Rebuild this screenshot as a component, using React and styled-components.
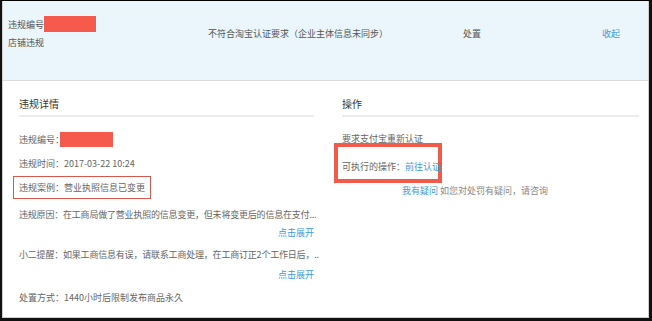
import React from "react";
import styled, { createGlobalStyle } from "styled-components";

const Global = createGlobalStyle`
  html, body { margin: 0; padding: 0; background: #fff; }
  body { font-family: "Noto Sans CJK SC", "Microsoft YaHei", sans-serif; }
`;

const Frame = styled.div`
  width: 652px;
  height: 321px;
  box-sizing: border-box;
  border-top: 1px solid #000;
  border-left: 2px solid #111;
  border-right: 3px solid #111;
  border-bottom: 3px solid #111;
  display: flex;
`;

const Inner = styled.div`
  flex: 1;
  display: flex;
  flex-direction: column;
  border-left: 1px solid #d0d0d0;
  border-right: 1px solid #d0d0d0;
  border-bottom: 1px solid #d0d0d0;
  font-size: 9px;
  color: #666;
  overflow: hidden;
`;

const Header = styled.div`
  height: 80px;
  flex: none;
  box-sizing: border-box;
  background: #eaf6fc;
  border-bottom: 1px solid #dcdcdc;
  display: flex;
  align-items: flex-start;
  padding: 15px 0 0 5px;
  color: #555;
`;

const HeadCol = styled.div`
  width: ${(p) => p.$w}px;
  flex: none;
  line-height: 18px;
  margin-top: ${(p) => p.$top || 0}px;
  color: ${(p) => (p.$link ? "#3b9be0" : "inherit")};
  white-space: nowrap;
`;

const Redact = styled.span`
  display: inline-block;
  vertical-align: middle;
  width: ${(p) => p.$w}px;
  height: ${(p) => p.$h}px;
  background: #f55a4c;
  margin-left: ${(p) => p.$ml || 0}px;
  margin-top: -3px;
`;

const Body = styled.div`
  flex: 1;
  display: flex;
`;

const Panel = styled.div`
  width: ${(p) => p.$w}px;
  flex: none;
  box-sizing: border-box;
  padding: 0 ${(p) => p.$pr}px 0 ${(p) => p.$pl}px;
  display: flex;
  flex-direction: column;
`;

const Title = styled.div`
  font-size: 10px;
  color: #333;
  line-height: 20px;
  padding: 13px 0 1px 0;
  border-bottom: 2px solid #ececec;
`;

const Row = styled.div`
  line-height: ${(p) => p.$lh || 24}px;
  margin-top: ${(p) => p.$mt || 0}px;
  white-space: nowrap;
  letter-spacing: ${(p) => (p.$tight ? "-0.2px" : "0")};
`;

const CaseBox = styled.span`
  display: inline-block;
  border: 1px solid #d9574c;
  line-height: 21px;
  padding: 0 5px;
  margin-left: -6px;
`;

const LinkRow = styled.div`
  line-height: ${(p) => p.$lh}px;
  text-align: right;
  color: #3b9be0;
`;

const Link = styled.span`
  color: #3b9be0;
`;

const ActionBox = styled.div`
  align-self: flex-start;
  box-sizing: border-box;
  width: 108px;
  height: 40px;
  margin: -4px 0 0 -8px;
  border: 4px solid #f25a4a;
  padding: 12px 0 0 4px;
  line-height: 16px;
  white-space: nowrap;
  background: #fff;
`;

const Help = styled.div`
  line-height: 16px;
  padding-left: 60px;
  white-space: nowrap;
  color: #888;
`;

export default function App() {
  return (
    <Frame>
      <Global />
      <Inner>
        <Header>
          <HeadCol $w={200}>
            <div>
              违规编号:
              <Redact $w={52} $h={16} $ml={-3} />
            </div>
            <div>店铺违规</div>
          </HeadCol>
          <HeadCol $w={255} $top={9}>
            不符合淘宝认证要求（企业主体信息未同步）
          </HeadCol>
          <HeadCol $w={139} $top={9}>
            处置
          </HeadCol>
          <HeadCol $w={40} $top={9} $link>
            收起
          </HeadCol>
        </Header>
        <Body>
          <Panel $w={322} $pl={16} $pr={11}>
            <Title>违规详情</Title>
            <Row $mt={11}>
              违规编号：
              <Redact $w={53} $h={15} $ml={-4} />
            </Row>
            <Row>违规时间：2017-03-22 10:24</Row>
            <Row>
              <CaseBox>违规案例：营业执照信息已变更</CaseBox>
            </Row>
            <Row $mt={3} $tight>
              违规原因：在工商局做了营业执照的信息变更，但未将变更后的信息在支付...
            </Row>
            <LinkRow $lh={12}>点击展开</LinkRow>
            <Row $mt={4} $tight>
              小二提醒：如果工商信息有误，请联系工商处理，在工商订正2个工作日后，..
            </Row>
            <LinkRow $lh={16}>点击展开</LinkRow>
            <Row $mt={3}>处置方式：1440小时后限制发布商品永久</Row>
          </Panel>
          <Panel $w={324} $pl={17} $pr={10}>
            <Title>操作</Title>
            <Row $lh={16} $mt={14}>要求支付宝重新认证</Row>
            <ActionBox>
              可执行的操作：<Link>前往认证</Link>
            </ActionBox>
            <Help>
              <Link>我有疑问</Link> 如您对处罚有疑问，请咨询
            </Help>
          </Panel>
        </Body>
      </Inner>
    </Frame>
  );
}
